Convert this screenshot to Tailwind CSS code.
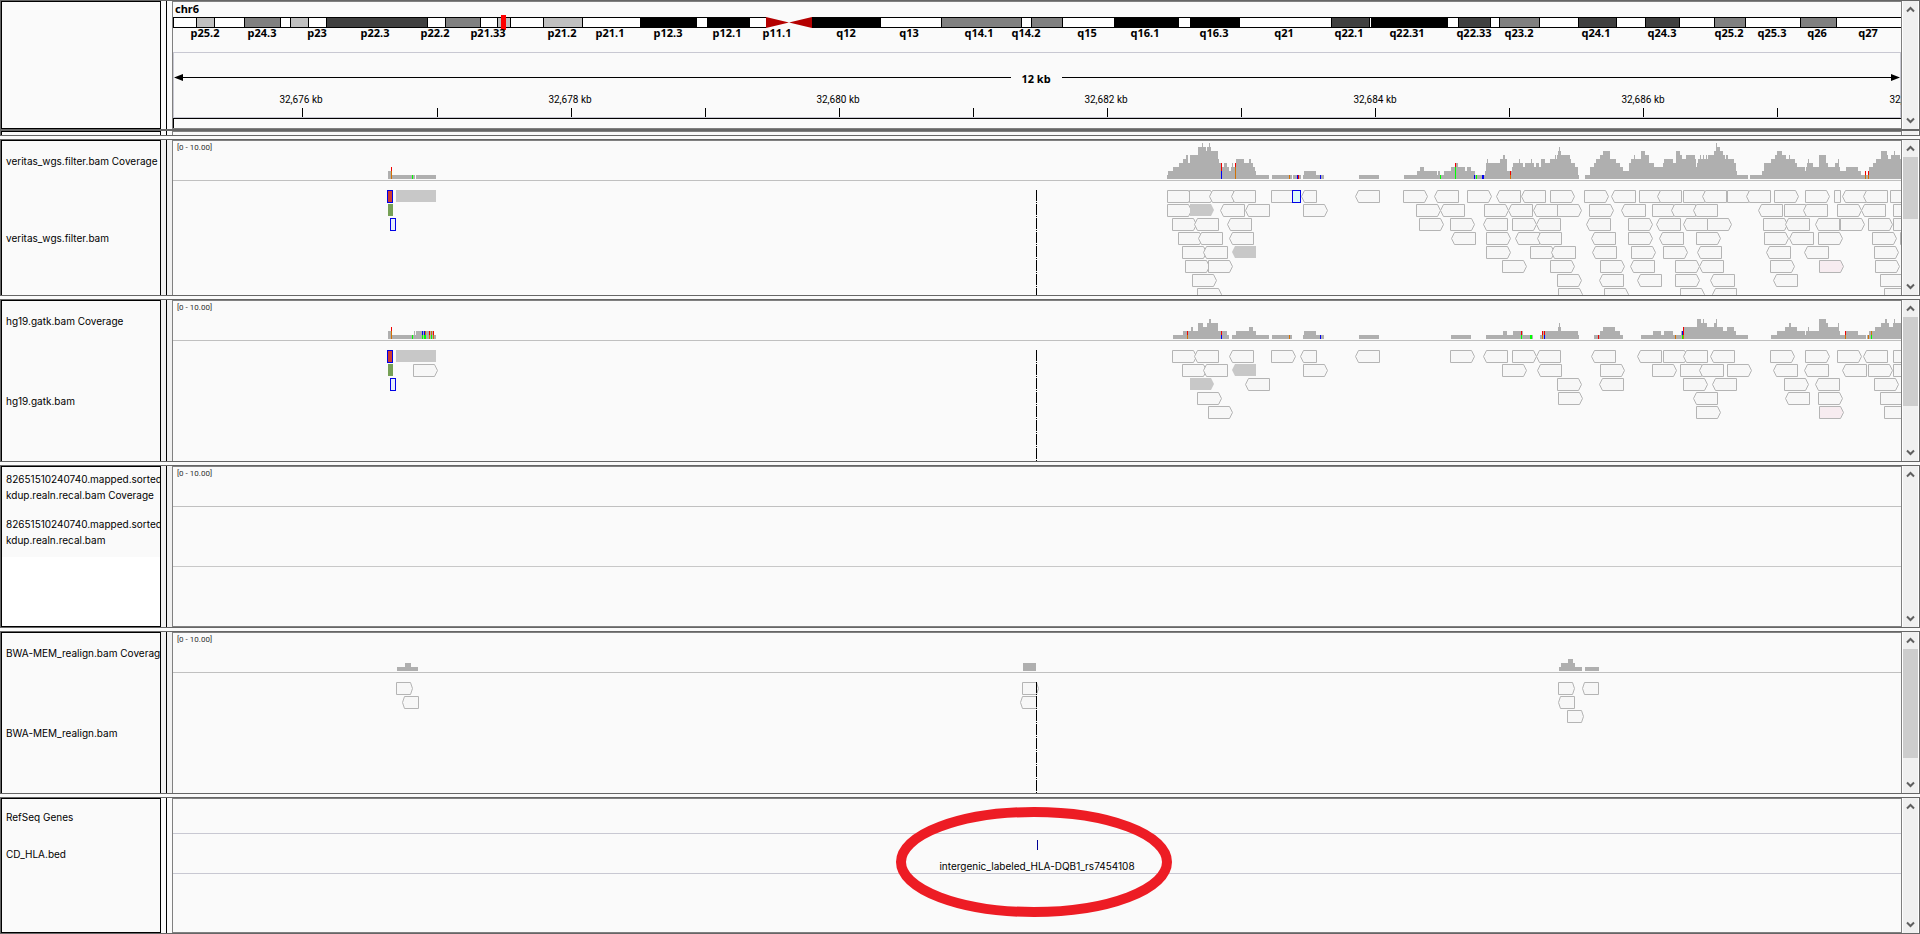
<!DOCTYPE html>
<html lang="en">
<head>
<meta charset="utf-8">
<title>Genome viewer - chr6</title>
<script src="https://cdn.jsdelivr.net/npm/@tailwindcss/browser@4"></script>
</head>
<body class="bg-[#fafafa] text-black font-['Inter',sans-serif] text-[10px] leading-4">
<main id="app" class="flex flex-col min-h-screen"></main>

<template id="row">
  <section class="flex border border-[#666666] shrink-0">
    <div data-part="names" class="w-40 shrink-0 flex flex-col overflow-hidden border-t border-x border-black whitespace-nowrap bg-[#fafafa]"></div>
    <div data-part="gutter" class="w-[11px] shrink-0 flex justify-center"><div class="w-px bg-black"></div></div>
    <div data-part="panel" class="flex-1 min-w-0 flex flex-col border-t border-x border-[#808080] bg-[#fafafa]">
      <svg class="w-full flex-1 block" height="1"></svg>
    </div>
    <div data-part="scroll" class="w-[17px] shrink-0 flex flex-col border-x border-white bg-[#f0f0f0]">
      <button type="button" aria-label="Scroll up" class="h-[17px] shrink-0 flex items-center justify-center">
        <svg width="9" height="7" viewBox="0 0 9 7" fill="none" stroke="#606060" stroke-width="2"><path d="M1 5.5 4.5 2 8 5.5"/></svg>
      </button>
      <div class="flex-1 min-h-0"><div data-part="thumb" class="bg-[#cdcdcd]"></div></div>
      <button type="button" aria-label="Scroll down" class="h-[17px] shrink-0 flex items-center justify-center">
        <svg width="9" height="7" viewBox="0 0 9 7" fill="none" stroke="#606060" stroke-width="2"><path d="M1 1.5 4.5 5 8 1.5"/></svg>
      </button>
    </div>
  </section>
</template>

<script>
const app = document.getElementById('app');
const NS = 'http://www.w3.org/2000/svg';
const GREY = '#afafaf', RED = '#f00000', BLUE = '#0000f0', GREEN = '#00ff00', ORANGE = '#d17105';

function el(svg, tag, attrs, text) {
  const n = document.createElementNS(NS, tag);
  for (const k in attrs) n.setAttribute(k, attrs[k]);
  if (text) n.textContent = text;
  svg.appendChild(n);
  return n;
}
const rect = (s, x, y, w, h, fill) => el(s, 'rect', {x, y, width: w, height: h, fill});

function addRow(cls, names, opt = {}) {
  const sec = document.getElementById('row').content.firstElementChild.cloneNode(true);
  sec.classList.add(...cls.split(' '));
  const part = k => sec.querySelector('[data-part=' + k + ']');
  part('names').innerHTML = names;
  part('gutter').classList.add(opt.light ? 'bg-[#fafafa]' : 'bg-[#f0f0f0]');
  if (opt.closed) {
    part('names').classList.add('border-b');
    part('panel').classList.add('border-b');
  }
  if (opt.thumb) part('thumb').style.height = opt.thumb + 'px';
  if (opt.bare) part('scroll').replaceChildren();
  app.appendChild(sec);
  return part('panel').querySelector('svg');
}

// --- tracks --------------------------------------------------------------
const BASE = 38, LANE0 = 49, LANE = 14;

function line(s, y, color) { rect(s, 0, y, '100%', 1, color); }
function scale(s) {
  el(s, 'text', {x: 4, y: 9, fill: '#303030', class: "text-[8px] font-['Roboto',sans-serif]"}, '[0 - 10.00]');
}
// steps: "x:depth" pairs, each depth holding until the next x
function coverage(s, at, steps) {
  const p = steps.split(' ').map(t => t.split(':').map(Number));
  for (let i = 0; i < p.length - 1; i++)
    if (p[i][1]) rect(s, at + p[i][0], BASE - 4 * p[i][1], p[i + 1][0] - p[i][0], 4 * p[i][1], GREY);
}
// mismatches: [x, width, from depth, to depth, colour]
function bases(s, at, list) {
  for (const [x, w, a, b, c] of list) rect(s, at + x, BASE - 4 * b, w, 4 * (b - a), c);
}
// reads: R/L arrow, F/G filled arrow, P pink arrow, B box; then x and optional /width
function reads(s, at, lanes, dw = 25) {
  lanes.forEach((lane, i) => {
    if (!lane) return;
    const y = LANE0 + i * LANE;
    for (const t of lane.split(' ')) {
      const k = t[0];
      let [x, w] = t.slice(1).split('/').map(Number);
      const filled = k === 'F' || k === 'G';
      w = w || (filled ? 24 : dw);
      x += at;
      const q = dw < 20 ? 2 : 3, o = filled ? 0 : .5;
      const l = x + o, r = x + w - o, t0 = y + o, b = y + 12 + o, m = y + 6 + o;
      let d;
      if (k === 'R' || k === 'P' || k === 'F') d = `M${l} ${t0}H${r - q}L${r} ${m}L${r - q} ${b}H${l}Z`;
      else if (k === 'B') d = `M${l} ${t0}H${r}V${b}H${l}Z`;
      else d = `M${r} ${t0}H${l + q}L${l} ${m}L${l + q} ${b}H${r}Z`;
      el(s, 'path', {d, fill: filled ? '#c8c8c8' : k === 'P' ? '#f7ecf0' : '#f7f7f7', stroke: filled ? 'none' : '#b4b4b4'});
    }
  });
}
function box(s, x, lane, w, fill, outline) {
  const y = LANE0 + lane * LANE;
  if (outline) el(s, 'rect', {x: x + .5, y: y + .5, width: w - 1, height: 12, fill, stroke: '#0000e6'});
  else rect(s, x, y, w, 12, fill);
}
function cursor(s) {
  el(s, 'path', {d: `M863.5 ${LANE0}v200`, stroke: '#000', 'stroke-dasharray': '11 1 1 1', fill: 'none'});
}
function leftCluster(s) {
  box(s, 214, 0, 6, '#cf3c32', true);
  box(s, 223, 0, 40, '#c8c8c8');
  box(s, 215, 1, 5, '#76a055');
  box(s, 217, 2, 6, '#e6f0fa', true);
}
const pair = (a, b) => `<div class="h-10 pl-1 shrink-0 flex items-center">${a}</div><div class="flex-1 pl-1 flex items-center">${b}</div>`;

// --- ideogram and ruler --------------------------------------------------
{
  const s = addRow('h-[130px]', '', {closed: true, light: true});
  const g = el(s, 'g', {transform: 'translate(-173 -2)'});
  el(g, 'text', {x: 175, y: 13, class: "font-bold text-[11px] font-['Noto_Sans',sans-serif]"}, 'chr6');
  rect(g, 173, 17, '100%', 11, '#000');
  rect(g, 174, 18, '100%', 9, '#fff');
  const bands = [[196,215,'#c0c0c0'],[244,281,'#808080'],[290,309,'#c0c0c0'],[326,428,'#404040'],[445,481,'#808080'],[497,511,'#c0c0c0'],[543,583,'#c0c0c0'],
    [640,697,'#000'],[707,750,'#000'],[812,881,'#000'],[941,1022,'#808080'],[1031,1063,'#808080'],[1114,1179,'#000'],[1190,1240,'#000'],
    [1331,1370,'#404040'],[1371,1448,'#000'],[1458,1491,'#404040'],[1499,1540,'#808080'],[1578,1617,'#404040'],[1645,1680,'#404040'],[1714,1746,'#808080'],[1800,1837,'#808080']];
  for (const [a, b, c] of bands) { rect(g, a, 17, b - a, 11, '#000'); rect(g, a + 1, 18, b - a - 2, 9, c); }
  rect(g, 766, 17, 46, 11, '#fafafa');
  el(g, 'path', {d: 'M766 17 L789 22.5 L766 28Z M812 17 L789 22.5 L812 28Z', fill: '#b40000'});
  rect(g, 501, 15, 5, 15, '#ff0000');
  const names = [['p25.2',205],['p24.3',262],['p23',317],['p22.3',375],['p22.2',435],['p21.33',488],['p21.2',562],['p21.1',610],['p12.3',668],['p12.1',727],['p11.1',777],
    ['q12',846],['q13',909],['q14.1',979],['q14.2',1026],['q15',1087],['q16.1',1145],['q16.3',1214],['q21',1284],['q22.1',1349],['q22.31',1407],['q22.33',1474],['q23.2',1519],
    ['q24.1',1596],['q24.3',1662],['q25.2',1729],['q25.3',1772],['q26',1817],['q27',1868]];
  for (const [t, x] of names) el(g, 'text', {x, y: 37, 'text-anchor': 'middle', class: "font-bold text-[11px] font-['Noto_Sans',sans-serif]"}, t);
  line(s, 50, '#c8c8d2');
  line(s, 115, '#c8c8d2');
  rect(s, 0, 50, 1, 66, '#c8c8d2');
  rect(g, 1900, 52, 1, 66, '#c8c8d2');
  rect(g, 176, 77, 835, 1, '#000');
  rect(g, 1062, 77, 836, 1, '#000');
  el(g, 'path', {d: 'M174 77.5 L183 74V81Z M1900 77.5 L1891 74V81Z'});
  el(g, 'text', {x: 1036, y: 83, 'text-anchor': 'middle', class: "font-bold text-[11px] font-['Noto_Sans',sans-serif]"}, '12 kb');
  [302,437,571,705,839,973,1107,1241,1375,1509,1643,1777].forEach(x => rect(g, x, 108, 1, 9, '#000'));
  [301,570,838,1106,1375,1643,1911].forEach((x, i) =>
    el(g, 'text', {x, y: 103, 'text-anchor': 'middle', class: "text-[10px] font-['Roboto',sans-serif]"}, `32,${676 + 2 * i} kb`));
  line(s, 116, '#000');
  rect(s, 0, 116, 1, 12, '#000');
}
addRow('h-[6px] mb-[3px]', '', {bare: true, light: true});

// --- veritas_wgs.filter.bam ----------------------------------------------
{
  const s = addRow('h-[157px] mb-[3px]', pair('veritas_wgs.filter.bam Coverage', 'veritas_wgs.filter.bam'), {thumb: 62});
  scale(s);
  coverage(s, 0, '215:2 219:1 242:0 243:1 263:0');
  bases(s, 0, [[218,1,2,3,RED],[218,1,0,2,ORANGE],[239,1,0,1,GREEN]]);
  coverage(s, 967, '27:1 28:2 33:3 39:4 43:5 46:6 48:4 50:6 58:8 62:9 63:8 66:7 67:8 69:9 70:8 71:7 78:5 79:4 82:3 84:4 87:3 89:2 91:3 92:4 93:3 95:4 96:5 104:4 109:5 111:4 113:3 115:2 116:1 129:0 132:1 152:0 153:1 161:0 163:1 164:2 176:1 184:0 219:1 239:0 264:1 277:2 280:3 284:2 297:1 298:2 300:1 304:2 311:3 315:4 318:3 325:2 327:3 331:2 335:1 344:1 345:2 346:4 347:5 348:4 360:5 363:6 365:5 367:2 372:3 373:4 379:5 380:4 381:4');
  coverage(s, 1347, '0:4 3:3 5:4 11:5 12:4 14:3 16:4 19:3 21:5 25:4 30:5 35:6 36:5 37:6 38:7 39:8 40:7 41:6 50:5 51:4 55:3 58:1 59:0 65:1 70:3 74:4 76:5 80:6 83:7 90:5 96:4 100:3 103:2 109:4 111:5 114:6 115:5 121:7 125:6 129:4 133:4 134:3 143:4 144:5 153:4 156:7 160:6 162:5 166:6 175:5 176:3 177:4 178:5 180:6 181:5 183:6 184:5 186:6 187:5 188:6 194:7 196:9 197:8 200:7 203:6 205:5 206:6 208:5 214:4 216:2 217:1 228:0 230:1 242:2 244:4 251:5 255:6 257:7 262:6 266:5 269:6 270:5 275:4 277:3 285:2 286:3 287:4 288:5 289:4 293:3 299:6 306:4 308:3 315:4 318:5 319:3 320:2 326:3 338:2 341:1 349:3 353:4 356:5 361:7 367:6 368:5 371:6 374:7 375:6 380:5 382:0');
  bases(s, 967, [[81,1,2,4,RED],[81,1,0,2,BLUE],[95,1,3,4,RED],[95,1,0,3,ORANGE],[149,1,0,1,ORANGE],[157,1,0,1,BLUE],[158,1,0,1,RED],[180,1,0,1,BLUE],[300,1,0,1,GREEN],
    [315,1,3,4,RED],[315,1,0,3,GREEN],[334,1,0,1,BLUE],[336,1,0,1,GREEN],[342,2,0,1,BLUE],[370,1,1,2,RED],[370,1,0,1,ORANGE]]);
  bases(s, 1347, [[345,1,1,2,RED],[345,1,0,1,ORANGE],[348,1,1,2,RED],[348,1,0,1,ORANGE]]);
  line(s, 39, '#c0c0c0');
  leftCluster(s);
  reads(s, 967, ['R27 R49 L69 L91 R131 L161/16 L215 R263 L294 R327 L356', 'R27 F50 L80 L105 R163 R276 L300 R344 L368', 'R32 L54 L87 R279 R310 L343 R372',
    'R38 L58 L89 L311 R346 L375', 'R42 L63 G92 R346', 'R45 R68 R362', 'R52', 'R57']);
  box(s, 1119, 0, 9, '#dcfafa', true);
  reads(s, 1347, ['L1 R30 R64 L91 R119 L137 R163 L182 R207 L226 R254 R285 B314/7 L322 L343 R370', 'L13 R37 R69 L101 R132 L151 L173 L238 R264 L283 R317 L341 R373',
    'L16 L66 R108 L136 L163 R187 R243 L265 L295 R320 R348 R373', 'L17 L71 R108 L139 R176 R244 L269 R298 R352 R380', 'R10 L31 L72 R111 R143 L177 L246 L284 R354',
    'R30 R80 L110 R155 L179 R250 P299 R355', 'R37 L79 L117 R155 L190 L253 R360', 'R38 R84 R160 L192 R364']);
  cursor(s);
}

// --- hg19.gatk.bam -------------------------------------------------------
{
  const s = addRow('h-[163px] mb-[3px]', pair('hg19.gatk.bam Coverage', 'hg19.gatk.bam'), {thumb: 89});
  scale(s);
  coverage(s, 0, '215:2 219:1 241:2 242:1 243:2 261:1 263:0');
  bases(s, 0, [[218,1,2,3,RED],[218,1,0,2,ORANGE],[239,1,0,1,GREEN],[249,1,1,2,BLUE],[249,1,0,1,GREEN],[251,1,1,2,BLUE],[252,1,1,2,ORANGE],[251,2,0,1,GREEN],
    [256,1,1,2,RED],[256,1,0,1,ORANGE],[258,1,1,2,ORANGE],[258,1,0,1,GREEN],[260,1,1,2,RED],[260,1,0,1,ORANGE]]);
  coverage(s, 967, '33:1 43:2 51:3 53:2 58:4 63:3 67:4 69:5 71:4 78:2 87:1 89:0 92:1 96:2 109:3 113:2 116:1 129:0 132:1 152:0 163:1 164:2 176:1 184:0 219:1 239:0 311:1 331:0 346:1 363:2 367:1 373:2 383:1 393:0');
  coverage(s, 1347, '20:1 22:2 38:3 39:4 40:3 41:2 58:1 59:0 74:1 80:2 83:3 95:2 100:1 103:0 121:1 133:2 141:1 144:2 153:1 161:2 163:3 177:5 181:4 183:5 184:4 187:3 194:4 196:5 197:3 203:2 207:3 214:2 216:1 228:0 251:1 257:2 265:3 269:4 271:3 277:2 285:1 286:2 288:3 289:2 299:5 306:4 308:3 318:4 319:2 320:1 325:2 338:1 346:0 347:1 349:2 355:3 361:4 365:5 367:4 369:3 373:4 374:5 375:4 382:0');
  bases(s, 967, [[47,1,1,2,RED],[47,1,0,1,ORANGE],[81,1,1,2,RED],[81,1,0,1,BLUE],[149,1,0,1,ORANGE],[180,1,0,1,BLUE],[381,1,1,2,RED],[381,1,0,1,GREEN],[390,2,0,1,GREEN]]);
  bases(s, 1347, [[22,1,1,2,RED],[22,1,0,1,ORANGE],[24,1,1,2,RED],[24,1,0,1,BLUE],[78,1,0,1,RED],[155,1,0,1,ORANGE],[162,1,0,1,GREEN],[162,1,1,2,BLUE],[163,1,1,3,RED],[163,1,0,1,ORANGE],
    [325,1,1,2,RED],[325,1,0,1,ORANGE],[348,1,0,1,ORANGE],[351,1,1,2,ORANGE],[351,1,0,1,GREEN]]);
  line(s, 39, '#c0c0c0');
  leftCluster(s);
  reads(s, 0, ['', 'R240']);
  reads(s, 967, ['R32 L54 L89 R131 L160/17 L215 R310 L343 R372', 'R42 L63 G92 R163 R362', 'F50 L105', 'R57', 'R68']);
  reads(s, 1347, ['L16 L71 L117 R143 L163 L190 R250 R285 R317 L343 R373', 'L17 R80 R132 R160 L179 R207 L253 L284 L322 R348 R373', 'R37 L79 R163 L192 R264 L295 R354',
    'R38 L173 L265 R298 R360', 'R176 P299 R364']);
  cursor(s);
}

// --- mapped.sorted, no reads in view -------------------------------------
{
  const two = (h, t) => `<div class="${h} pl-1 shrink-0 flex flex-col justify-center bg-[#fafafa]"><div>82651510240740.mapped.sorted.mar</div><div>${t}</div></div>`;
  const s = addRow('h-[163px] mb-[3px]', two('h-10', 'kdup.realn.recal.bam Coverage') + two('h-[50px]', 'kdup.realn.recal.bam') + '<div class="flex-1 bg-white"></div>', {closed: true});
  scale(s);
  line(s, 39, '#c0c0c0');
  line(s, 99, '#c8c8c8');
}

// --- BWA-MEM_realign.bam -------------------------------------------------
{
  const s = addRow('h-[163px] mb-[3px]', pair('BWA-MEM_realign.bam Coverage', 'BWA-MEM_realign.bam'), {thumb: 109});
  scale(s);
  coverage(s, 0, '224:1 232:2 238:1 245:0 850:2 863:0');
  coverage(s, 1347, '39:1 41:2 48:3 53:2 55:1 62:0 65:1 79:0');
  line(s, 39, '#c0c0c0');
  reads(s, 0, ['R223 R849', 'L229 L847'], 17);
  reads(s, 1347, ['R38 L62', 'L38', 'R47'], 17);
  cursor(s);
}

// --- annotation tracks ---------------------------------------------------
{
  const s = addRow('min-h-[137px] flex-1',
    '<div class="h-[35px] pl-1 shrink-0 flex items-center">RefSeq Genes</div><div class="h-10 pl-1 shrink-0 flex items-center">CD_HLA.bed</div>', {closed: true, light: true});
  line(s, 34, '#c8c8d2');
  line(s, 74, '#c8c8d2');
  rect(s, 864, 41, 1, 10, '#000096');
  el(s, 'text', {x: 864, y: 71, 'text-anchor': 'middle', class: "text-[10px] font-['Inter',sans-serif]"}, 'intergenic_labeled_HLA-DQB1_rs7454108');
  el(s, 'ellipse', {cx: 861, cy: 63, rx: 133, ry: 50, fill: 'none', stroke: '#ed1c24', 'stroke-width': 10});
}
</script>
</body>
</html>
